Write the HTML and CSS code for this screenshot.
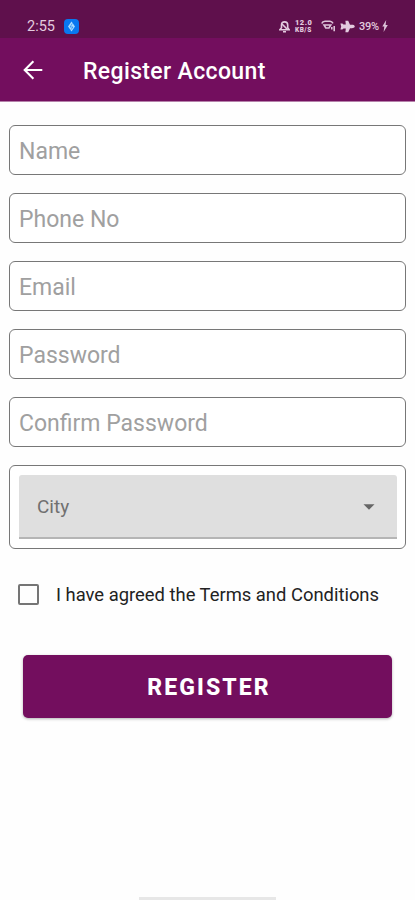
FILE: index.html
```html
<!DOCTYPE html>
<html lang="en">
<head>
    <meta charset="UTF-8">
    <meta name="viewport" content="width=device-width, initial-scale=1.0">
    <title>Register Account</title>
    <link rel="stylesheet" href="styles.css">
</head>
<body>
    <div class="status-bar">
        <span class="time">2:55</span>
        <svg class="app-icon" width="15" height="15" viewBox="0 0 15 15">
            <rect width="15" height="15" rx="4" fill="#0878f0"/>
            <path d="M7.5 2.5 L11 7.5 L7.5 12.5 L4 7.5 Z" fill="#a9dcff"/>
            <path d="M8.3 4.5 L6 8 H9 L6.8 10.8" fill="none" stroke="#0878f0" stroke-width="0.6"/>
        </svg>
        <div class="status-icons">
            <svg class="bell" width="11" height="13" viewBox="0 0 11 13" fill="none" stroke="#e3cbdf" stroke-width="1.6">
                <path d="M0.8 9.7 H10.2 L8.7 7.8 V5 C8.7 0.8 2.5 0.8 2.5 5 V7.8 Z"/>
                <path d="M4 11.7 H7 M3 4 L8.5 9.5"/>
            </svg>
            <div class="net-speed"><span>12.0</span><span>KB/S</span></div>
            <svg class="wifi" width="15" height="12" viewBox="0 0 15 12" fill="none" stroke="#dcc3d8" stroke-width="1.6">
                <path d="M0.8 3.4 C1.5 1.4 3 1.3 4 1.3 H9 C10.5 1.3 11.3 2 12 3.4"/>
                <path d="M3 5 H9.8 L8 8 H4.8 Z"/>
                <path d="M10.8 7 V9.5 M13.2 6 V11.3"/>
            </svg>
            <svg class="plane" width="15" height="13" viewBox="0 0 15 13" fill="#e3cbdf">
                <path d="M14.8 6.5 C14.8 5.2 13 4.8 12 4.8 H10 L8.2 0.8 H5.4 L5.8 4.4 H3.5 L2.4 3.4 H0.4 L1.2 6.5 L0.4 9.6 H2.4 L3.5 8.6 H5.8 L5.4 12.2 H8.2 L10 8.2 H12 C13 8.2 14.8 7.8 14.8 6.5 Z"/>
            </svg>
            <span class="battery">39%</span>
            <svg class="bolt" width="6" height="12" viewBox="0 0 6 12" fill="#dcc3d8">
                <path d="M4.2 0 L0.3 6.5 H2.3 L1.6 12 L5.8 5 H3.6 Z"/>
            </svg>
        </div>
    </div>

    <header class="app-bar">
        <svg class="back" width="20" height="20" viewBox="0 0 20 20" fill="none" stroke="#fff" stroke-width="2.1">
            <path d="M19.3 10 H2 M10.4 1.3 L1.7 10 L10.4 18.7"/>
        </svg>
        <h1>Register Account</h1>
    </header>

    <form class="register-form">
        <input class="field" type="text" placeholder="Name">
        <input class="field" type="tel" placeholder="Phone No">
        <input class="field" type="email" placeholder="Email">
        <input class="field" type="password" placeholder="Password">
        <input class="field" type="password" placeholder="Confirm Password">

        <div class="city-box">
            <div class="city-select">
                <span>City</span>
                <svg width="12" height="6" viewBox="0 0 12 6" fill="#666">
                    <path d="M0.5 0.2 H11.5 L6 5.8 Z"/>
                </svg>
            </div>
        </div>

        <label class="terms">
            <input type="checkbox">
            <span>I have agreed the Terms and Conditions</span>
        </label>

        <button class="register-btn" type="button">REGISTER</button>
    </form>

    <div class="home-bar"></div>
</body>
</html>
```
FILE: styles.css
```css
* {
    box-sizing: border-box;
}
body {
    margin: 0;
    height: 900px;
    display: flex;
    flex-direction: column;
    overflow: hidden;
    background: #fefefe;
    font-family: Roboto, sans-serif;
}
.status-bar {
    flex: none;
    display: flex;
    align-items: center;
    height: 38px;
    padding: 14px 26px 0 27px;
    background: #5f104c;
    color: #e3cbdf;
}
.time {
    width: 37px;
    font-size: 14.5px;
    line-height: 15px;
}
.status-icons {
    display: flex;
    align-items: center;
    margin-left: auto;
}
.net-speed {
    display: flex;
    flex-direction: column;
    width: 20px;
    margin: 0 6px 0 5px;
    font-size: 7.5px;
    font-weight: 900;
    line-height: 9px;
    letter-spacing: 0.5px;
}
.net-speed span + span {
    font-size: 6.5px;
    line-height: 7px;
}
.plane {
    margin: 0 4px 0 4px;
}
.battery {
    width: 22px;
    font-size: 11px;
    font-weight: 500;
    letter-spacing: -0.2px;
}
.bolt {
    margin: 0 1px;
}
.app-bar {
    flex: none;
    display: flex;
    align-items: center;
    height: 64px;
    padding: 0 0 0 23px;
    background: #730e5e;
    border-bottom: 1px solid #b581aa;
}
.app-bar h1 {
    margin: 4px 0 0 40px;
    color: #fff;
    font-size: 23px;
    font-weight: 500;
    letter-spacing: 0.36px;
}
.register-form {
    display: flex;
    flex-direction: column;
    gap: 18px;
    padding: 23px 9px 0;
}
.field {
    width: 100%;
    height: 50px;
    padding: 2px 9px 0;
    border: 1px solid #777;
    border-radius: 6px;
    background: #fff;
    font-family: inherit;
    font-size: 23px;
}
.field::placeholder {
    color: #a0a0a0;
}
.city-box {
    height: 84px;
    padding: 9px 8px 9px 9px;
    border: 1px solid #777;
    border-radius: 6px;
    background: #fff;
}
.city-select {
    display: flex;
    align-items: center;
    justify-content: space-between;
    height: 64px;
    padding: 1px 22px 0 18px;
    border-bottom: 2px solid #b5b5b5;
    border-radius: 3px 3px 0 0;
    background: #dfdfdf;
    color: #707070;
    font-size: 19px;
}
.terms {
    display: flex;
    align-items: center;
    height: 54px;
    padding-left: 9px;
    color: #222;
    font-size: 18.4px;
}
.terms input {
    appearance: none;
    width: 21px;
    height: 21px;
    margin: 0 17px 0 0;
    border: 2px solid #757575;
    border-radius: 2px;
}
.terms span {
    padding-top: 1px;
}
.register-btn {
    height: 63px;
    margin: 16px 14px 0;
    padding: 2px 0 0 3px;
    border: none;
    border-radius: 5px;
    background: #730e5e;
    box-shadow: 0 1px 3px rgba(0, 0, 0, 0.3);
    color: #fff;
    font-family: inherit;
    font-size: 23px;
    font-weight: 800;
    letter-spacing: 2.1px;
}
.home-bar {
    width: 137px;
    height: 3px;
    margin: auto auto 0 139px;
    background: #e7e7e7;
}
```
